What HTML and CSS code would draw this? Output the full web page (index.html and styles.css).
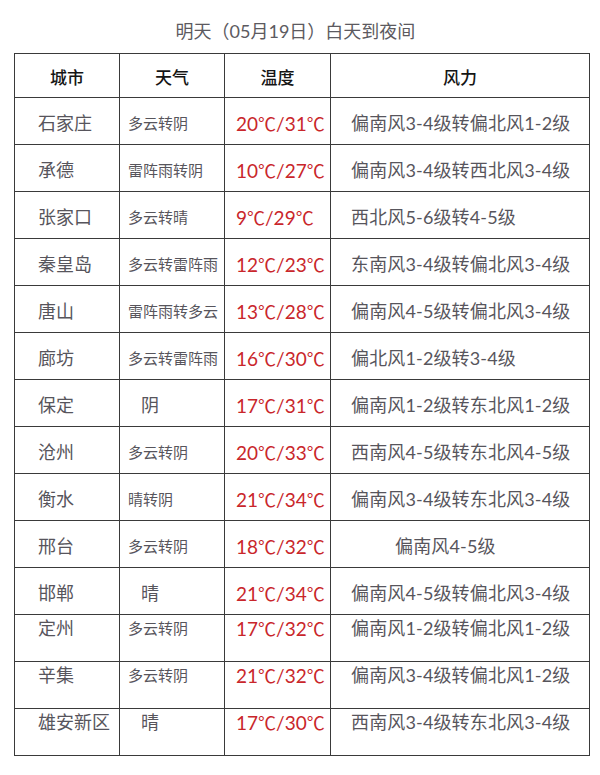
FILE: index.html
```html
<!DOCTYPE html>
<html lang="zh-CN">
<head>
<meta charset="utf-8">
<link rel="stylesheet" href="styles.css">
</head>
<body>
<div class="page">
  <h1 class="title">明天（05月19日）白天到夜间</h1>
  <table class="wx">
    <colgroup>
      <col class="c1"><col class="c2"><col class="c3"><col class="c4">
    </colgroup>
    <thead>
      <tr><th>城市</th><th>天气</th><th>温度</th><th>风力</th></tr>
    </thead>
    <tbody>
      <tr><td class="city">石家庄</td><td class="sky">多云转阴</td><td class="temp">20<span class="deg">℃</span>/31<span class="deg">℃</span></td><td class="wind">偏南风3-4级转偏北风1-2级</td></tr>
      <tr><td class="city">承德</td><td class="sky">雷阵雨转阴</td><td class="temp">10<span class="deg">℃</span>/27<span class="deg">℃</span></td><td class="wind">偏南风3-4级转西北风3-4级</td></tr>
      <tr><td class="city">张家口</td><td class="sky">多云转晴</td><td class="temp">9<span class="deg">℃</span>/29<span class="deg">℃</span></td><td class="wind">西北风5-6级转4-5级</td></tr>
      <tr><td class="city">秦皇岛</td><td class="sky">多云转雷阵雨</td><td class="temp">12<span class="deg">℃</span>/23<span class="deg">℃</span></td><td class="wind">东南风3-4级转偏北风3-4级</td></tr>
      <tr><td class="city">唐山</td><td class="sky">雷阵雨转多云</td><td class="temp">13<span class="deg">℃</span>/28<span class="deg">℃</span></td><td class="wind">偏南风4-5级转偏北风3-4级</td></tr>
      <tr><td class="city">廊坊</td><td class="sky">多云转雷阵雨</td><td class="temp">16<span class="deg">℃</span>/30<span class="deg">℃</span></td><td class="wind">偏北风1-2级转3-4级</td></tr>
      <tr><td class="city">保定</td><td class="sky single">阴</td><td class="temp">17<span class="deg">℃</span>/31<span class="deg">℃</span></td><td class="wind">偏南风1-2级转东北风1-2级</td></tr>
      <tr><td class="city">沧州</td><td class="sky">多云转阴</td><td class="temp">20<span class="deg">℃</span>/33<span class="deg">℃</span></td><td class="wind">西南风4-5级转东北风4-5级</td></tr>
      <tr><td class="city">衡水</td><td class="sky">晴转阴</td><td class="temp">21<span class="deg">℃</span>/34<span class="deg">℃</span></td><td class="wind">偏南风3-4级转东北风3-4级</td></tr>
      <tr><td class="city">邢台</td><td class="sky">多云转阴</td><td class="temp">18<span class="deg">℃</span>/32<span class="deg">℃</span></td><td class="wind short">偏南风4-5级</td></tr>
      <tr><td class="city">邯郸</td><td class="sky single">晴</td><td class="temp">21<span class="deg">℃</span>/34<span class="deg">℃</span></td><td class="wind">偏南风4-5级转偏北风3-4级</td></tr>
      <tr class="top"><td class="city">定州</td><td class="sky">多云转阴</td><td class="temp">17<span class="deg">℃</span>/32<span class="deg">℃</span></td><td class="wind">偏南风1-2级转偏北风1-2级</td></tr>
      <tr class="top"><td class="city">辛集</td><td class="sky">多云转阴</td><td class="temp">21<span class="deg">℃</span>/32<span class="deg">℃</span></td><td class="wind">偏南风3-4级转偏北风1-2级</td></tr>
      <tr class="top"><td class="city">雄安新区</td><td class="sky single">晴</td><td class="temp">17<span class="deg">℃</span>/30<span class="deg">℃</span></td><td class="wind">西南风3-4级转东北风3-4级</td></tr>
    </tbody>
  </table>
</div>
</body>
</html>
```
FILE: styles.css
```css
html, body {
  margin: 0;
  padding: 0;
  background: #ffffff;
}
.page {
  width: 575px;
  margin-left: 14px;
  padding-top: 19px;
  font-family: Lato, "Noto Sans CJK SC", sans-serif;
  color: #57555c;
}
.title {
  margin: 0 0 10px 0;
  font-size: 18px;
  line-height: 24px;
  font-weight: 400;
  text-align: center;
  color: #5c5a60;
  padding-right: 12px;
}
.wx {
  width: 575px;
  border-collapse: collapse;
  table-layout: fixed;
}
.c1 { width: 105px; }
.c2 { width: 105px; }
.c3 { width: 106px; }
.c4 { width: 259px; }
.wx th, .wx td {
  border: 1px solid #3a3a3a;
  padding: 0;
  white-space: nowrap;
  overflow: hidden;
}
.wx th {
  height: 41px;
  font-family: "Noto Sans CJK SC", sans-serif;
  font-weight: 500;
  font-size: 17px;
  color: #151515;
  text-align: center;
  padding-top: 2px;
}
.wx td {
  height: 47px;
  font-size: 18px;
  line-height: 27px;
  vertical-align: middle;
  padding-top: 4px;
  box-sizing: border-box;
}
.wx tr.top td {
  vertical-align: top;
  padding-top: 0;
}
.city {
  padding-left: 23px !important;
}
.sky {
  font-size: 15px !important;
  padding-left: 8px !important;
}
.sky.single {
  font-size: 18px !important;
  padding-left: 21px !important;
}
.temp {
  color: #c9262b;
  font-size: 19px !important;
  padding-left: 11px !important;
}
.deg {
  font-family: "Noto Sans CJK SC", sans-serif;
  font-size: 18px;
}
.wind {
  letter-spacing: 0.15px;
  padding-left: 20px !important;
}
.wind.short {
  padding-left: 64px !important;
}
```
